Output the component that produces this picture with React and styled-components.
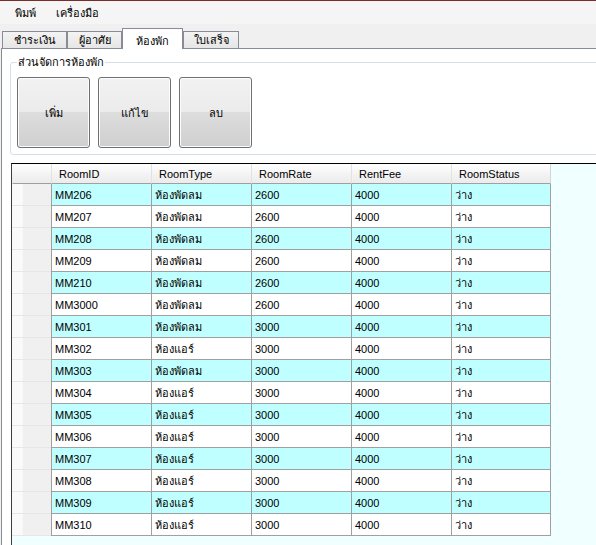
import styled, { createGlobalStyle } from "styled-components";

const GlobalStyle = createGlobalStyle`
  html, body {
    margin: 0;
    padding: 0;
    background: #f0f0f0;
  }
  body {
    font-family: "Liberation Sans", Tahoma, "Noto Sans", sans-serif;
    font-size: 11px;
    color: #000;
  }
`

const Window = styled.div`
  width: 596px;
  height: 545px;
  overflow: hidden;
  display: flex;
  flex-direction: column;
  border-top: 1px solid #7a2c2c;
  box-sizing: border-box;
  background: #f0f0f0;
`

const MenuBar = styled.div`
  height: 23px;
  display: flex;
  align-items: center;
  padding-left: 8px;
  background: #f5f5f5;
  flex-shrink: 0;
`

const MenuItem = styled.div`
  padding: 0 7px;
  margin-right: 6px;
  line-height: 20px;
`

const TabStrip = styled.div`
  height: 24px;
  display: flex;
  align-items: flex-end;
  padding-left: 2px;
  flex-shrink: 0;
  position: relative;
  z-index: 1;
`

const Tab = styled.div`
  box-sizing: border-box;
  width: ${p => p.$w}px;
  height: ${p => (p.$active ? 21 : 17)}px;
  margin-bottom: ${p => (p.$active ? -1 : 0)}px;
  border: 1px solid #898c95;
  border-bottom: none;
  background: ${p => (p.$active ? "#ffffff" : "linear-gradient(#f3f3f3, #e6e6e6)")};
  display: flex;
  justify-content: center;
  align-items: ${p => (p.$active ? "flex-start" : "center")};
  padding-top: ${p => (p.$active ? 3 : 0)}px;
`

const TabPage = styled.div`
  flex: 1;
  display: flex;
  flex-direction: column;
  margin-left: 1px;
  border-top: 1px solid #898c95;
  border-left: 1px solid #898c95;
  background: #ffffff;
  min-height: 0;
`

const GroupBox = styled.fieldset`
  margin: 6px -20px 0 8px;
  padding: 8px 6px 6px 6px;
  border: 1px solid #d5dfe5;
  border-radius: 3px;
  display: flex;
  gap: 8px;
`

const Legend = styled.legend`
  padding: 0 1px;
  line-height: 14px;
  font-size: 11px;
`

const ActionButton = styled.button`
  width: 73px;
  height: 71px;
  border: 1px solid #707070;
  border-radius: 3px;
  box-shadow: inset 0 0 0 1px #fcfcfc;
  background: linear-gradient(#f2f2f2 0%, #ebebeb 50%, #dddddd 50%, #cfcfcf 100%);
  font-family: inherit;
  font-size: 11px;
  color: #000;
  padding: 0;
`

const Grid = styled.div`
  flex: 1;
  margin: 8px -10px 0 9px;
  border-top: 1px solid #000;
  border-left: 1px solid #3c3c3c;
  background: #f0ffff;
`

const Row = styled.div`
  display: grid;
  grid-template-columns: 39px repeat(5, 100px);
  width: max-content;
`

const HeaderCell = styled.div`
  height: 20px;
  box-sizing: border-box;
  padding-left: 7px;
  display: flex;
  align-items: center;
  background: linear-gradient(#ffffff, #f2f2f2 60%, #ececec);
  border-left: 1px solid ${p => (p.$corner ? "transparent" : "#e2e2e2")};
  border-right: ${p => (p.$last ? "1px solid #d5d5d5" : "none")};
  border-bottom: 1px solid #a0a0a0;
`

const RowHeader = styled.div`
  height: 22px;
  box-sizing: border-box;
  background: linear-gradient(to right, #fafafa 0%, #fafafa 25%, #f0f0f0 30%, #f0f0f0 100%);
  border-bottom: 1px solid #e6e6e6;
`

const Cell = styled.div`
  height: 22px;
  box-sizing: border-box;
  padding-left: 3px;
  display: flex;
  align-items: center;
  background: ${p => (p.$alt ? "#c0ffff" : "#ffffff")};
  border-left: 1px solid #a0a0a0;
  border-right: ${p => (p.$last ? "1px solid #a0a0a0" : "none")};
  border-bottom: 1px solid #a0a0a0;
  white-space: nowrap;
`

const columns = ["RoomID", "RoomType", "RoomRate", "RentFee", "RoomStatus"];

const fan = "ห้องพัดลม";
const air = "ห้องแอร์";

const rooms = [
  ["MM206", fan, "2600"],
  ["MM207", fan, "2600"],
  ["MM208", fan, "2600"],
  ["MM209", fan, "2600"],
  ["MM210", fan, "2600"],
  ["MM3000", fan, "2600"],
  ["MM301", fan, "3000"],
  ["MM302", air, "3000"],
  ["MM303", fan, "3000"],
  ["MM304", air, "3000"],
  ["MM305", air, "3000"],
  ["MM306", air, "3000"],
  ["MM307", air, "3000"],
  ["MM308", air, "3000"],
  ["MM309", air, "3000"],
  ["MM310", air, "3000"],
];

const tabs = [
  { label: "ชำระเงิน", w: 65 },
  { label: "ผู้อาศัย", w: 55 },
  { label: "ห้องพัก", w: 61, active: true },
  { label: "ใบเสร็จ", w: 56 },
];

function App() {
  return (
    <>
      <GlobalStyle />
      <Window>
        <MenuBar>
          <MenuItem>พิมพ์</MenuItem>
          <MenuItem>เครื่องมือ</MenuItem>
        </MenuBar>
        <TabStrip>
          {tabs.map(t => (
            <Tab key={t.label} $w={t.w} $active={t.active}>{t.label}</Tab>
          ))}
        </TabStrip>
        <TabPage>
          <GroupBox>
            <Legend>ส่วนจัดการห้องพัก</Legend>
            <ActionButton>เพิ่ม</ActionButton>
            <ActionButton>แก้ไข</ActionButton>
            <ActionButton>ลบ</ActionButton>
          </GroupBox>
          <Grid>
            <Row>
              <HeaderCell $corner />
              {columns.map((c, i) => (
                <HeaderCell key={c} $last={i === columns.length - 1}>{c}</HeaderCell>
              ))}
            </Row>
            {rooms.map((r, i) => {
              const values = [r[0], r[1], r[2], "4000", "ว่าง"];
              return (
                <Row key={r[0]}>
                  <RowHeader />
                  {values.map((v, j) => (
                    <Cell key={j} $alt={i % 2 === 0} $last={j === values.length - 1}>{v}</Cell>
                  ))}
                </Row>
              );
            })}
          </Grid>
        </TabPage>
      </Window>
    </>
  );
}

export default App
